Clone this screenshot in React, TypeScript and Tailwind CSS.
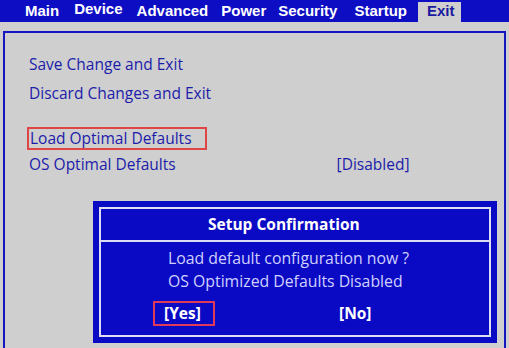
import React from 'react'

const tabs = [
  { label: 'Main', ml: 'ml-[25px]' },
  { label: 'Device', ml: 'ml-[15px]' },
  { label: 'Advanced', ml: 'ml-[14px]' },
  { label: 'Power', ml: 'ml-[13px]' },
  { label: 'Security', ml: 'ml-[12px]' },
  { label: 'Startup', ml: 'ml-[17px]' },
]

export default function App() {
  return (
    <div className="relative w-[509px] h-[348px] overflow-hidden bg-[#cfcfcf]">
      {/* top menu bar */}
      <div
        className="h-[22px] bg-[#0d0dc4] flex items-end text-white font-bold text-[15px] leading-none"
        style={{ fontFamily: '"Liberation Sans", Arial, sans-serif' }}
      >
        {tabs.map(t => (
          <span key={t.label} className={`${t.ml} ${t.label === 'Device' ? 'pb-[6px]' : 'pb-[4px]'}`}>
            {t.label}
          </span>
        ))}
        <span className="ml-[11px] h-[20px] w-[43px] pl-[9px] bg-[#cfcfcf] text-[#1a1aa0] flex items-end pb-[4px]">
          Exit
        </span>
      </div>

      {/* main panel */}
      <div
        className="mt-[9px] mx-[3px] h-[320px] border-2 border-b-0 border-[#1616c0] text-[#1c1caa] text-[15.5px]"
        style={{ fontFamily: '"Open Sans", "Noto Sans", sans-serif' }}
      >
        <div className="pl-[24px] pt-[20px] flex flex-col">
          <div className="leading-[22px]">Save Change and Exit</div>
          <div className="leading-[22px] mt-[7px]">Discard Changes and Exit</div>
          <div className="mt-[23px] -ml-[2px] w-[180px] h-[23px] border-2 border-[#e04545] pl-[1px] leading-[19px]">
            Load Optimal Defaults
          </div>
          <div className="flex leading-[22px] mt-[3px]">
            <span>OS Optimal Defaults</span>
            <span className="ml-[161px]">[Disabled]</span>
          </div>
        </div>
      </div>

      {/* confirmation dialog */}
      <div
        className="absolute left-[93px] top-[201px] w-[404px] h-[142px] bg-[#0a0ac4] p-[6px]"
        style={{ fontFamily: '"Open Sans", "Noto Sans", sans-serif' }}
      >
        <div className="h-full border-2 border-[#dcdcf4] flex flex-col">
          <div className="h-[33px] border-b-2 border-[#dcdcf4] flex items-center pl-[107px] pt-[1px] text-white font-bold text-[15.5px]">
            Setup Confirmation
          </div>
          <div className="flex flex-col pl-[67px] text-[#d0d0ff] text-[15.8px] leading-[23px] pt-[5px]">
            <div>Load default configuration now ?</div>
            <div>OS Optimized Defaults Disabled</div>
          </div>
          <div className="flex items-center mt-[8px] text-white font-bold text-[15.5px]">
            <span className="ml-[52px] w-[62px] h-[25px] border-2 border-[#e03a5a] flex items-center pl-[9px]">
              [Yes]
            </span>
            <span className="ml-[124px]">[No]</span>
          </div>
        </div>
      </div>
    </div>
  )
}
